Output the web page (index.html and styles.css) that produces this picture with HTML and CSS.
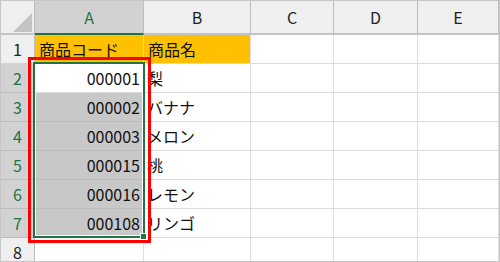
FILE: index.html
```html
<!DOCTYPE html>
<html lang="ja">
<head>
  <meta charset="UTF-8">
  <title>商品一覧</title>
  <link rel="stylesheet" href="styles.css">
</head>
<body>

  <div class="sheet">
    <div class="corner"><span class="tri"></span></div>
    <div class="col-head selected">A</div>
    <div class="col-head">B</div>
    <div class="col-head">C</div>
    <div class="col-head">D</div>
    <div class="col-head">E</div>

    <div class="row-head">1</div>
    <div class="cell title">商品コード</div>
    <div class="cell title">商品名</div>
    <div class="cell"></div>
    <div class="cell"></div>
    <div class="cell"></div>

    <div class="row-head selected">2</div>
    <div class="cell num">000001</div>
    <div class="cell">梨</div>
    <div class="cell"></div>
    <div class="cell"></div>
    <div class="cell"></div>

    <div class="row-head selected">3</div>
    <div class="cell num picked">000002</div>
    <div class="cell">バナナ</div>
    <div class="cell"></div>
    <div class="cell"></div>
    <div class="cell"></div>

    <div class="row-head selected">4</div>
    <div class="cell num picked">000003</div>
    <div class="cell">メロン</div>
    <div class="cell"></div>
    <div class="cell"></div>
    <div class="cell"></div>

    <div class="row-head selected">5</div>
    <div class="cell num picked">000015</div>
    <div class="cell">桃</div>
    <div class="cell"></div>
    <div class="cell"></div>
    <div class="cell"></div>

    <div class="row-head selected">6</div>
    <div class="cell num picked">000016</div>
    <div class="cell">レモン</div>
    <div class="cell"></div>
    <div class="cell"></div>
    <div class="cell"></div>

    <div class="row-head selected">7</div>
    <div class="cell num picked">000108</div>
    <div class="cell">リンゴ</div>
    <div class="cell"></div>
    <div class="cell"></div>
    <div class="cell"></div>

    <div class="row-head last">8</div>
    <div class="cell"></div>
    <div class="cell"></div>
    <div class="cell"></div>
    <div class="cell"></div>
    <div class="cell"></div>

    <!-- selection range A2:A7 with fill handle -->
    <div class="range"><span class="handle"></span></div>
    <!-- red highlight around the range -->
    <div class="mark"></div>
  </div>

</body>
</html>
```

FILE: styles.css
```css
* {
  box-sizing: border-box;
}

html, body {
  margin: 0;
  padding: 0;
  overflow: hidden;
  background: #fff;
}

body {
  font-family: 'Noto Sans CJK JP', 'Noto Sans', sans-serif;
  font-size: 16px;
  line-height: 18px;
  color: #111;
}

.sheet {
  position: relative;
  width: 500px;
  height: 262px;
  overflow: hidden;
  border: 1px solid #c6c6c6;
  display: grid;
  grid-template-columns: 34px 109px 107px 83px 84px 81px;
  grid-template-rows: 34px repeat(8, 29px);
}

.corner {
  position: relative;
  background: #efefef;
  border-right: 1px solid #bdbdbd;
  border-bottom: 2px solid #c4c4c4;
}

.corner .tri {
  position: absolute;
  right: 2px;
  bottom: 1px;
  width: 19px;
  height: 19px;
  background: #c3c3c3;
  clip-path: polygon(100% 0, 100% 100%, 0 100%);
}

.col-head {
  background: #efefef;
  border-right: 1px solid #bdbdbd;
  border-bottom: 2px solid #c4c4c4;
  display: flex;
  align-items: center;
  justify-content: center;
  color: #222;
}

.col-head.selected {
  background: #d2d2d2;
  color: #217346;
  border-bottom-color: #217346;
}

.row-head {
  background: #efefef;
  border-right: 1px solid #bdbdbd;
  border-bottom: 1px solid #d4d4d4;
  display: flex;
  align-items: center;
  justify-content: center;
  color: #222;
}

.row-head.selected {
  background: #d2d2d2;
  color: #217346;
  border-bottom-color: #bcbcbc;
}

/* last row is cut by the window, keep its number inside */
.row-head.last {
  align-items: flex-start;
  padding-top: 5px;
}

.cell {
  border-right: 1px solid #dcdcdc;
  border-bottom: 1px solid #dcdcdc;
  display: flex;
  align-items: center;
  padding: 0 3px;
  white-space: nowrap;
}

.cell.title {
  background: #ffc000;
  padding-left: 4px;
}

.cell.num {
  justify-content: flex-end;
}

.cell.picked {
  background: #c8c8c8;
  border-bottom-color: #bdbdbd;
  border-right-color: #c8c8c8;
}

.range {
  position: absolute;
  left: 32px;
  top: 61px;
  width: 112px;
  height: 176px;
  border: 2px solid #217346;
  box-shadow: inset 0 0 0 1px #fff;
}

.handle {
  position: absolute;
  right: -4px;
  bottom: -4px;
  width: 7px;
  height: 7px;
  background: #217346;
  border: 1px solid #fff;
}

.mark {
  position: absolute;
  left: 27px;
  top: 56px;
  width: 123px;
  height: 186px;
  border: 3px solid #ff0000;
}
```
